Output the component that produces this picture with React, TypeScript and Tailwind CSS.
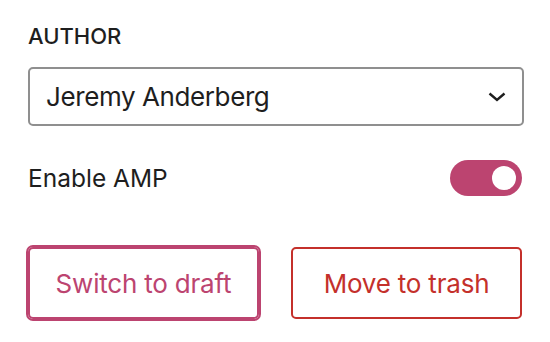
import { useState } from 'react'

function Chevron() {
  return (
    <svg width="18" height="10" viewBox="0 0 18 10" fill="none" aria-hidden>
      <path d="M1.5 1.5 9 8l7.5-6.5" stroke="#1e1e1e" strokeWidth="2.4" />
    </svg>
  )
}

function Toggle({ on, onChange }: { on: boolean; onChange: (v: boolean) => void }) {
  return (
    <button
      type="button"
      role="switch"
      aria-checked={on}
      onClick={() => onChange(!on)}
      className="relative h-[36px] w-[72px] shrink-0 rounded-full bg-[#bc4470]"
    >
      <span
        className={
          on
            ? 'absolute right-[6px] top-[6px] h-[24px] w-[24px] rounded-full bg-white'
            : 'absolute left-[6px] top-[6px] h-[24px] w-[24px] rounded-full bg-white'
        }
      />
    </button>
  )
}

export default function App() {
  const [amp, setAmp] = useState(true)

  return (
    <div
      className="h-[342px] w-[550px] bg-white px-[28px] pt-[25px] text-[#1e1e1e]"
      style={{ fontFamily: 'Inter, "Noto Sans", sans-serif' }}
    >
      <div className="text-[22px] font-medium uppercase leading-[22px]">Author</div>

      <div className="mt-[20px] flex h-[59px] w-[496px] items-center justify-between rounded-[5px] border-2 border-[#8f8f8f] pl-[16px] pr-[16px]">
        <span className="text-[26px] leading-none tracking-[-0.4px]">Jeremy Anderberg</span>
        <Chevron />
      </div>

      <div className="mt-[34px] flex h-[36px] items-center justify-between">
        <span className="text-[24.5px] leading-none">Enable AMP</span>
        <Toggle on={amp} onChange={setAmp} />
      </div>

      <div className="mt-[51px] flex gap-[32px]">
        <button
          type="button"
          className="h-[72px] w-[232px] rounded-[5px] border-2 border-[#bc4470] text-[26px] tracking-[-0.2px] text-[#bc4470] shadow-[0_0_0_2px_#bc4470]"
        >
          Switch to draft
        </button>
        <button
          type="button"
          className="h-[72px] w-[232px] rounded-[5px] border-2 border-[#c4302b] text-[26px] tracking-[-0.2px] text-[#c4302b]"
        >
          Move to trash
        </button>
      </div>
    </div>
  )
}
